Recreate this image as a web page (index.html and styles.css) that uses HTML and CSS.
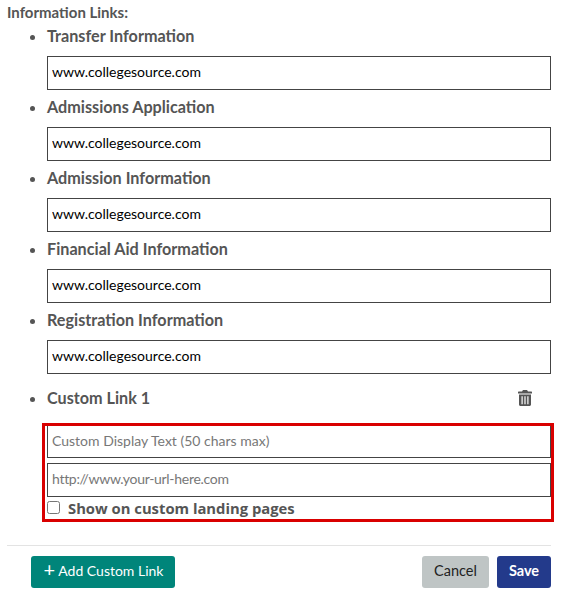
FILE: index.html
```html
<!DOCTYPE html>
<html lang="en">
<head>
    <meta charset="UTF-8">
    <title>Information Links</title>
    <link rel="stylesheet" href="styles.css">
</head>
<body>
    <form class="links-form">
        <div class="links-title">Information Links:</div>
        <ul class="links-list">
            <li class="link-item">
                <div class="link-label">Transfer Information</div>
                <input class="link-input" type="text" value="www.collegesource.com">
            </li>
            <li class="link-item">
                <div class="link-label">Admissions Application</div>
                <input class="link-input" type="text" value="www.collegesource.com">
            </li>
            <li class="link-item">
                <div class="link-label">Admission Information</div>
                <input class="link-input" type="text" value="www.collegesource.com">
            </li>
            <li class="link-item">
                <div class="link-label">Financial Aid Information</div>
                <input class="link-input" type="text" value="www.collegesource.com">
            </li>
            <li class="link-item">
                <div class="link-label">Registration Information</div>
                <input class="link-input" type="text" value="www.collegesource.com">
            </li>
            <li class="link-item custom-item">
                <div class="custom-head">
                    <div class="link-label">Custom Link 1</div>
                    <svg class="trash-icon" width="14" height="16" viewBox="0 0 14 16" aria-hidden="true">
                        <path fill="#555" fill-rule="evenodd" d="M5 0h4l1 1.500h3.400c.4 0 .6.3.6.6v1.300H0V2.100c0-.3.2-.6.6-.6H4zM1 4.500h12V14.500c0 .8-.7 1.500-1.500 1.500h-9C1.700 16 1 15.300 1 14.500zM3.500 6.200v8h1.200v-8zM6.400 6.200v8h1.200v-8zM9.300 6.200v8h1.200v-8z"/>
                    </svg>
                </div>
                <div class="custom-box">
                    <input class="link-input" type="text" placeholder="Custom Display Text (50 chars max)">
                    <input class="link-input url-input" type="text" placeholder="http://www.your-url-here.com">
                    <label class="landing-check">
                        <input type="checkbox">
                        <span>Show on custom landing pages</span>
                    </label>
                </div>
            </li>
        </ul>
        <div class="form-actions">
            <button type="button" class="btn btn-add"><span class="plus">+</span> Add Custom Link</button>
            <div class="actions-right">
                <button type="button" class="btn btn-cancel">Cancel</button>
                <button type="button" class="btn btn-save">Save</button>
            </div>
        </div>
    </form>
</body>
</html>
```

FILE: styles.css
```css
body {
    margin: 0;
    padding: 0;
    background: #fff;
    font-family: 'Lato', 'Open Sans', sans-serif;
    color: #555;
    overflow: hidden;
}

.links-form {
    width: 544px;
    margin-left: 7px;
}

.links-title {
    font-size: 15px;
    font-weight: 700;
    line-height: 14px;
    padding-top: 5px;
}

.links-list {
    margin: 0;
    padding: 0 0 0 40px;
}

.link-item {
    height: 71px;
    padding-top: 7px;
    box-sizing: border-box;
    font-size: 16px;
}

.link-label {
    font-size: 16.2px;
    font-weight: 700;
    line-height: 18px;
}

.link-input {
    display: block;
    box-sizing: border-box;
    width: 504px;
    height: 34px;
    margin-top: 11px;
    padding: 0 4px 3px;
    border: 1px solid #444;
    border-radius: 0;
    background: #fff;
    color: #000;
    font-family: 'Lato', 'Open Sans', sans-serif;
    font-size: 14px;
    outline: none;
}

.link-input::placeholder {
    color: #777;
}

.url-input {
    letter-spacing: -0.3px;
}

.custom-item {
    height: auto;
    padding-top: 14px;
}

.custom-head {
    display: flex;
    justify-content: space-between;
    align-items: center;
    height: 18px;
}

.trash-icon {
    margin-right: 19px;
}

.custom-box {
    box-sizing: border-box;
    width: 512px;
    height: 99px;
    margin: 16px 0 0 -5px;
    padding: 0 0 0 2px;
    border: 3px solid #d90000;
}

/* top edge of the first input sits under the red border */
.custom-box .link-input:first-child {
    height: 32px;
    margin-top: 0;
    border-top: none;
}

.custom-box .link-input + .link-input {
    margin-top: 5px;
}

.landing-check {
    display: flex;
    align-items: center;
    gap: 8px;
    height: 21px;
    font-family: 'Open Sans', sans-serif;
    font-size: 14.8px;
    font-weight: 700;
}

.landing-check input {
    width: 13px;
    height: 13px;
    margin: 0;
}

.form-actions {
    display: flex;
    justify-content: space-between;
    margin-top: 23px;
    padding: 10px 0 0 24px;
    border-top: 1px solid #e3e3e3;
}

.actions-right {
    display: flex;
    gap: 8px;
}

.btn {
    height: 32px;
    padding: 0 0 3px;
    border: none;
    border-radius: 3px;
    font-family: 'Lato', 'Open Sans', sans-serif;
    font-size: 14.5px;
}

.btn-add {
    width: 144px;
    padding-left: 1px;
    background: #00857a;
    color: #fff;
    font-size: 14px;
}

.plus {
    font-size: 20px;
    line-height: 14px;
    vertical-align: -1px;
}

.btn-cancel {
    width: 67px;
    background: #bfc5c5;
    color: #222;
}

.btn-save {
    width: 54px;
    background: #233a8b;
    color: #fff;
    font-weight: 700;
}
```
